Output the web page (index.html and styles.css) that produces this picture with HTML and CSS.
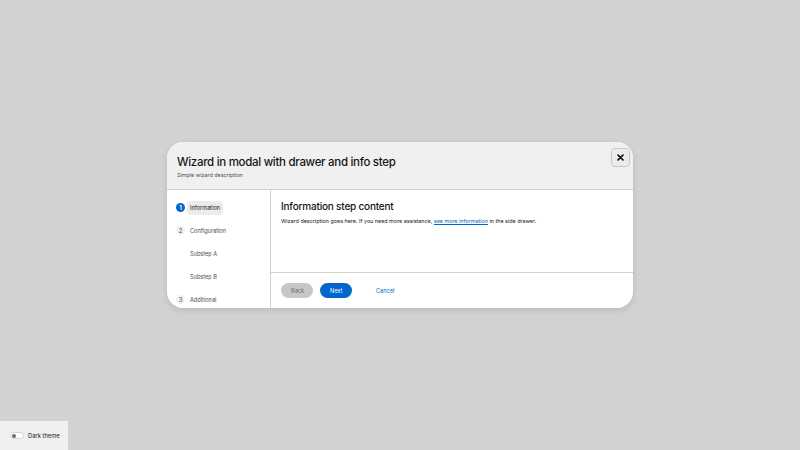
FILE: index.html
```html
<!DOCTYPE html>
<html>
<head>
<meta charset="utf-8">
<link rel="stylesheet" href="styles.css">
</head>
<body>
<div class="backdrop">
  <div class="modal">
    <header class="modal-header">
      <div class="titles">
        <h1 class="title">Wizard in modal with drawer and info step</h1>
        <p class="subtitle">Simple wizard description</p>
      </div>
      <button class="close" aria-label="Close">
        <svg width="7" height="7" viewBox="0 0 10 10"><path d="M1.5 1.5 L8.5 8.5 M8.5 1.5 L1.5 8.5" stroke="#151515" stroke-width="2.4" stroke-linecap="round"/></svg>
      </button>
    </header>
    <div class="modal-main">
      <nav class="nav">
        <div class="nav-item"><span class="num current">1</span><span class="label active">Information</span></div>
        <div class="nav-item"><span class="num">2</span><span class="label">Configuration</span></div>
        <div class="nav-item"><span class="num blank"></span><span class="label">Substep A</span></div>
        <div class="nav-item"><span class="num blank"></span><span class="label">Substep B</span></div>
        <div class="nav-item"><span class="num">3</span><span class="label">Additional</span></div>
      </nav>
      <div class="content">
        <div class="body">
          <h2 class="step-title">Information step content</h2>
          <p class="desc">Wizard description goes here. If you need more assistance, <a href="#">see more information</a> in the side drawer.</p>
        </div>
        <footer class="footer">
          <button class="btn back">Back</button>
          <button class="btn next">Next</button>
          <button class="btn cancel">Cancel</button>
        </footer>
      </div>
    </div>
  </div>
</div>
<div class="theme-toggle">
  <span class="switch"><span class="knob"></span></span>
  <span class="toggle-label">Dark theme</span>
</div>
</body>
</html>
```
FILE: styles.css
```css
* { box-sizing: border-box; }
html, body { margin: 0; padding: 0; }
body {
  width: 800px;
  height: 450px;
  background: #d2d2d2;
  font-family: Inter, "Noto Sans", sans-serif;
  color: #151515;
  overflow: hidden;
  position: relative;
}
.backdrop {
  width: 800px;
  height: 450px;
  display: flex;
  align-items: center;
  justify-content: center;
}
.modal {
  width: 466px;
  height: 166px;
  background: #ffffff;
  border-radius: 16px;
  overflow: hidden;
  display: flex;
  flex-direction: column;
  box-shadow: 0 2px 6px rgba(0,0,0,0.12);
}
.modal-header {
  flex: none;
  height: 48px;
  background: #f0f0f0;
  border-bottom: 1px solid #d2d2d2;
  display: flex;
  justify-content: space-between;
  align-items: flex-start;
  padding: 6px 3px 0 10px;
}
.titles { padding-top: 7px; }
.title {
  margin: 0;
  font-size: 11.5px;
  font-weight: 500;
  line-height: 14px;
  letter-spacing: -0.3px;
}
.subtitle {
  margin: 2px 0 0;
  font-size: 5.4px;
  line-height: 8px;
  color: #4d4d4d;
}
.close {
  width: 19px;
  height: 19px;
  border: 1px solid #c7c7c7;
  border-radius: 4px;
  background: #ececec;
  display: flex;
  align-items: center;
  justify-content: center;
  padding: 0;
}
.modal-main {
  flex: 1;
  min-height: 0;
  display: flex;
}
.nav {
  width: 104px;
  border-right: 1px solid #d2d2d2;
  padding: 6px 0 0 9px;
}
.nav-item {
  height: 23px;
  display: flex;
  align-items: center;
}
.num {
  width: 9px;
  height: 9px;
  border-radius: 50%;
  font-size: 6px;
  line-height: 9px;
  text-align: center;
  color: #4d4d4d;
  background: #f2f2f2;
  flex: none;
}
.num.current { background: #0066cc; color: #fff; font-weight: 600; }
.num.blank { background: transparent; }
.label {
  margin-left: 2px;
  padding: 0 3px;
  height: 14px;
  line-height: 14px;
  font-size: 5.6px;
  color: #4d4d4d;
  border-radius: 4px;
}
.label.active { background: #ececec; color: #151515; }
.content {
  flex: 1;
  display: flex;
  flex-direction: column;
}
.body {
  flex: none;
  height: 83px;
  border-bottom: 1px solid #d2d2d2;
  padding: 9px 10px 0 10px;
}
.step-title {
  margin: 0;
  font-size: 10px;
  font-weight: 500;
  line-height: 14px;
  letter-spacing: -0.2px;
}
.desc {
  margin: 4px 0 0;
  font-size: 5.4px;
  line-height: 8px;
  color: #151515;
}
.desc a { color: #0066cc; text-decoration: underline; }
.footer {
  flex: 1;
  display: flex;
  align-items: center;
  gap: 7px;
  padding: 0 10px;
}
.btn {
  height: 15px;
  border: none;
  border-radius: 999px;
  font-family: inherit;
  font-size: 5.6px;
  padding: 0 10px;
  width: 32px;
}
.back { background: #c7c7c7; color: #6a6e73; }
.next { background: #0066cc; color: #fff; }
.cancel { background: transparent; color: #0066cc; width: auto; padding: 0 17px; }
.theme-toggle {
  position: absolute;
  left: 0;
  bottom: 0;
  width: 68px;
  height: 29px;
  background: #f0f0f0;
  display: flex;
  align-items: center;
  padding-left: 10px;
}
.switch {
  width: 14px;
  height: 7px;
  border-radius: 4px;
  background: #fff;
  border: 1px solid #d2d2d2;
  display: flex;
  align-items: center;
  padding-left: 1px;
}
.knob {
  width: 4px;
  height: 4px;
  border-radius: 50%;
  background: #6a6e73;
}
.toggle-label {
  margin-left: 4px;
  font-size: 5.8px;
  color: #151515;
}
```
